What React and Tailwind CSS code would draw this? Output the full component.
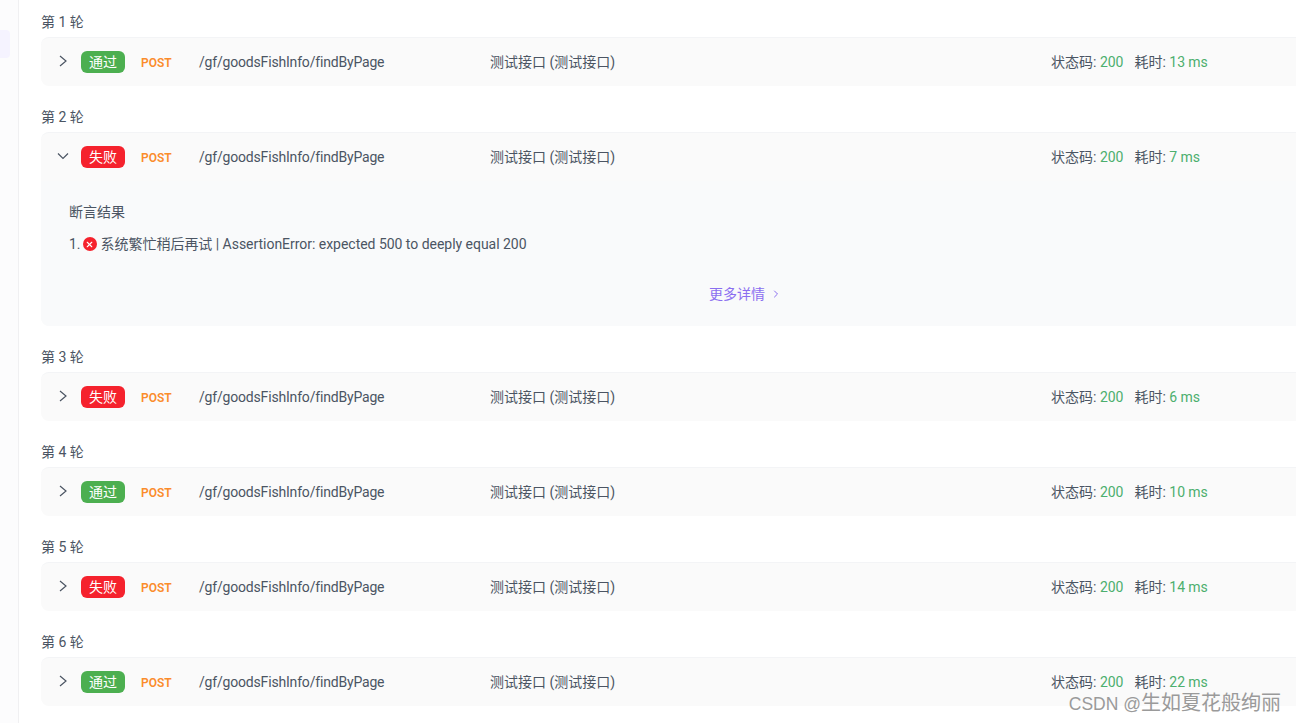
import { ChevronRight, X } from 'lucide-react'

const ROUNDS = [
  { n: 1, pass: true, ms: 13 },
  { n: 2, pass: false, ms: 7, open: true },
  { n: 3, pass: false, ms: 6 },
  { n: 4, pass: true, ms: 10 },
  { n: 5, pass: false, ms: 14 },
  { n: 6, pass: true, ms: 22 },
]

const FONT = "font-['Roboto','Noto_Sans_CJK_SC',sans-serif]"

// thin caret, wider than the lucide chevrons
function Caret({ open }) {
  return (
    <svg width="12" height="12" viewBox="0 0 12 12" fill="none" stroke="currentColor" strokeWidth="1.2">
      <path d={open ? 'M1 3.5l5 5 5-5' : 'M3 1l6 5-6 5'} />
    </svg>
  )
}

function Details() {
  return (
    <div className="h-[145px] pl-[28px] pt-[22px] bg-[#f9fafb] rounded-b-lg">
      <div className="h-[18px] leading-[18px]">断言结果</div>
      <div className="mt-[14px] h-[18px] flex items-center">
        <span>1.</span>
        <span className="ml-[2px] w-[14px] h-[14px] rounded-full bg-[#f5222d] flex items-center justify-center">
          <X size={9} strokeWidth={3} className="text-white" />
        </span>
        <span className="ml-[4px] tracking-[-0.03px]">系统繁忙稍后再试 | AssertionError: expected 500 to deeply equal 200</span>
      </div>
      <div className="mt-[32px] pl-[640px] h-[18px] flex items-center text-[#8b6ff0]">
        <span>更多详情</span>
        <ChevronRight size={12} className="ml-[5px]" />
      </div>
    </div>
  )
}

function Round({ n, pass, ms, open }) {
  return (
    <section className="mb-[9px] text-[#4b5563]">
      <h3 className="h-[37px] pt-[13px] leading-[18px]">第 {n} 轮</h3>
      <div className="w-[1300px] rounded-lg overflow-hidden border-t border-[#f3f4f6] bg-[#fafafa]">
        <div className="h-[48px] flex items-center pl-[16px]">
          <span className="w-[24px] -mt-[2px] flex">
            <Caret open={open} />
          </span>
          <span
            className={`w-[44px] h-[22px] rounded-md text-white text-center leading-[22px] ${pass ? 'bg-[#4caf50]' : 'bg-[#f5222d]'}`}
          >
            {pass ? '通过' : '失败'}
          </span>
          <span className="ml-[16px] mt-[1px] w-[58px] text-[12px] font-semibold text-[#fa8c2b]">POST</span>
          <span className="w-[291px] tracking-[-0.18px]">/gf/goodsFishInfo/findByPage</span>
          <span className="w-[561px]">测试接口 (测试接口)</span>
          <span>状态码: <span className="text-[#4caf6e]">200</span></span>
          <span className="ml-[11px]">耗时: <span className="text-[#4caf6e] tracking-[-0.1px]">{ms} ms</span></span>
        </div>
        {open && <Details />}
      </div>
    </section>
  )
}

export default function App() {
  return (
    <div className={`relative h-[723px] w-[1296px] overflow-hidden flex bg-white text-[14px] ${FONT}`}>
      {/* Collapsed side nav */}
      <aside className="w-[19px] shrink-0 bg-[#fcfcfd] border-r border-[#f0f0f2] pt-[30px]">
        <div className="w-[10px] h-[28px] rounded-r bg-[#f5f3ff]" />
      </aside>

      <main className="pl-[22px] min-w-0">
        {ROUNDS.map((r) => (
          <Round key={r.n} {...r} />
        ))}
      </main>

      {/* Watermark */}
      <span className="absolute right-[15px] top-[690px] text-[20px] leading-[26px] text-[#9a9a9a] whitespace-nowrap">
        <span className="font-['Liberation_Sans',sans-serif] text-[17.5px]">CSDN @</span>生如夏花般绚丽
      </span>
    </div>
  )
}
